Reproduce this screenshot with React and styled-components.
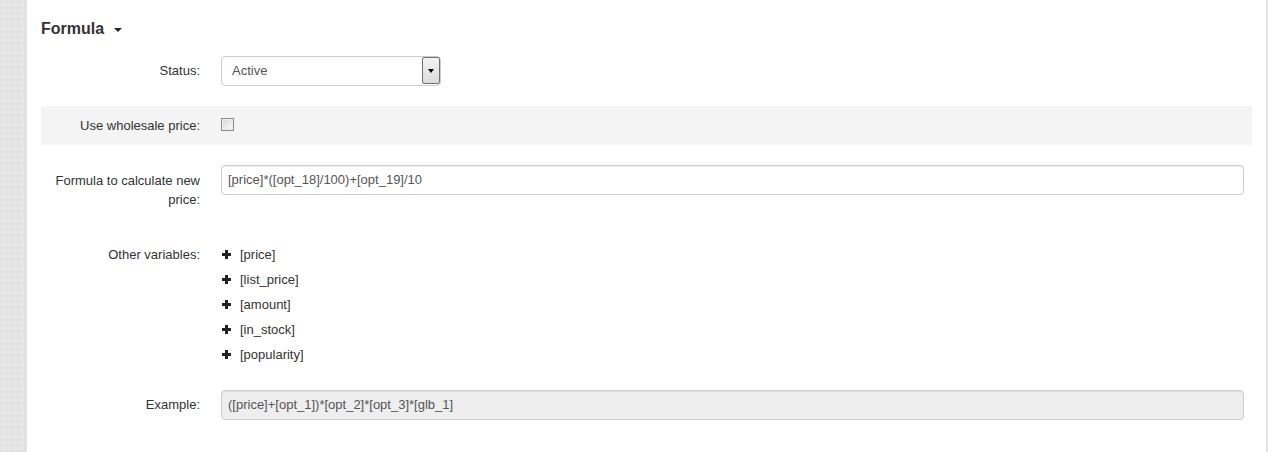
import React from 'react'
import styled, { createGlobalStyle } from 'styled-components'

const GlobalStyle = createGlobalStyle`
  html, body {
    margin: 0;
    padding: 0;
    background: #fff;
  }
  body {
    font-family: "Liberation Sans", Arial, sans-serif;
    font-size: 13px;
    color: #333;
  }
`

const Page = styled.div`
  display: flex;
  min-height: 100vh;
`

const SideStrip = styled.div`
  flex: 0 0 ${props => props.$width}px;
  background-color: #e6e6e6;
  background-image:
    repeating-linear-gradient(0deg, rgba(0, 0, 0, 0.025) 0 1px, transparent 1px 6px),
    repeating-linear-gradient(90deg, rgba(0, 0, 0, 0.025) 0 1px, transparent 1px 6px);
`

const Panel = styled.div`
  flex: 1;
  background: #fff;
  padding: 19px 14px 0 14px;
`

const Heading = styled.h3`
  display: flex;
  align-items: center;
  gap: 10px;
  margin: 0 0 17px;
  font-size: 16px;
  line-height: 20px;
  font-weight: bold;
  color: #333;
`

const Caret = styled.span`
  width: 0;
  height: 0;
  border-left: 4px solid transparent;
  border-right: 4px solid transparent;
  border-top: 4px solid #222;
  margin-top: 1px;
`

const Row = styled.div`
  display: flex;
  align-items: flex-start;
  padding: ${props => (props.$shaded ? '10px 8px 10px 0' : '0 8px 0 0')};
  margin-bottom: ${props => props.$mb}px;
  background: ${props => (props.$shaded ? '#f4f4f4' : 'transparent')};
`

const Label = styled.label`
  flex: 0 0 159px;
  margin-right: 21px;
  padding-top: ${props => props.$pt}px;
  text-align: right;
  line-height: ${props => props.$lh || 18}px;
  color: #333;
`

const Control = styled.div`
  flex: 1;
  display: flex;
  flex-direction: column;
`

const SelectBox = styled.div`
  display: flex;
  align-items: stretch;
  width: 220px;
  height: 30px;
  box-sizing: border-box;
  border: 1px solid #ccc;
  border-radius: 4px;
  background: #fff;
`

const SelectValue = styled.span`
  flex: 1;
  padding-left: 10px;
  line-height: 28px;
  color: #555;
`

const DropButton = styled.span`
  display: flex;
  align-items: center;
  justify-content: center;
  width: 18px;
  margin: 0 0 1px 0;
  box-sizing: border-box;
  border: 1px solid #707070;
  border-radius: 2px;
  background: linear-gradient(#f3f3f3, #dcdcdc);
`

const DropArrow = styled.span`
  width: 0;
  height: 0;
  border-left: 3.5px solid transparent;
  border-right: 3.5px solid transparent;
  border-top: 4px solid #000;
`

const CheckBox = styled.span`
  display: block;
  width: 13px;
  height: 13px;
  margin-top: 2px;
  box-sizing: border-box;
  border: 1px solid #8a8a8a;
  box-shadow: inset 0 0 0 1px #f0f0f0;
  background: linear-gradient(135deg, #d6d6d6, #fbfbfb);
`

const TextInput = styled.div`
  height: 30px;
  box-sizing: border-box;
  border: 1px solid #ccc;
  border-radius: 4px;
  padding: 0 6px;
  line-height: 28px;
  color: #555;
  background: ${props => (props.$disabled ? '#eee' : '#fff')};
  box-shadow: inset 0 1px 1px rgba(0, 0, 0, 0.075);
`

const VarItem = styled.div`
  display: flex;
  align-items: center;
  gap: 9px;
  height: 25px;
  padding-left: 1px;
  color: #333;
`

const PlusIcon = () => (
  <svg width="9" height="9" viewBox="0 0 9 9">
    <rect x="3" y="0" width="3" height="9" fill="#222" />
    <rect x="0" y="3" width="9" height="3" fill="#222" />
  </svg>
)

const variables = ['[price]', '[list_price]', '[amount]', '[in_stock]', '[popularity]']

export default function App() {
  return (
    <>
      <GlobalStyle />
      <Page>
        <SideStrip $width={27} />
        <Panel>
          <Heading>
            Formula <Caret />
          </Heading>

          <Row $mb={20}>
            <Label $pt={6}>Status:</Label>
            <Control>
              <SelectBox>
                <SelectValue>Active</SelectValue>
                <DropButton>
                  <DropArrow />
                </DropButton>
              </SelectBox>
            </Control>
          </Row>

          <Row $shaded $mb={20}>
            <Label $pt={1}>Use wholesale price:</Label>
            <Control>
              <CheckBox />
            </Control>
          </Row>

          <Row $mb={33}>
            <Label $pt={6} $lh={19}>
              Formula to calculate new price:
            </Label>
            <Control>
              <TextInput>[price]*([opt_18]/100)+[opt_19]/10</TextInput>
            </Control>
          </Row>

          <Row $mb={23}>
            <Label $pt={0} $lh={25}>Other variables:</Label>
            <Control>
              {variables.map(v => (
                <VarItem key={v}>
                  <PlusIcon />
                  {v}
                </VarItem>
              ))}
            </Control>
          </Row>

          <Row $mb={30}>
            <Label $pt={6}>Example:</Label>
            <Control>
              <TextInput $disabled>([price]+[opt_1])*[opt_2]*[opt_3]*[glb_1]</TextInput>
            </Control>
          </Row>
        </Panel>
        <SideStrip $width={2} />
      </Page>
    </>
  )
}
